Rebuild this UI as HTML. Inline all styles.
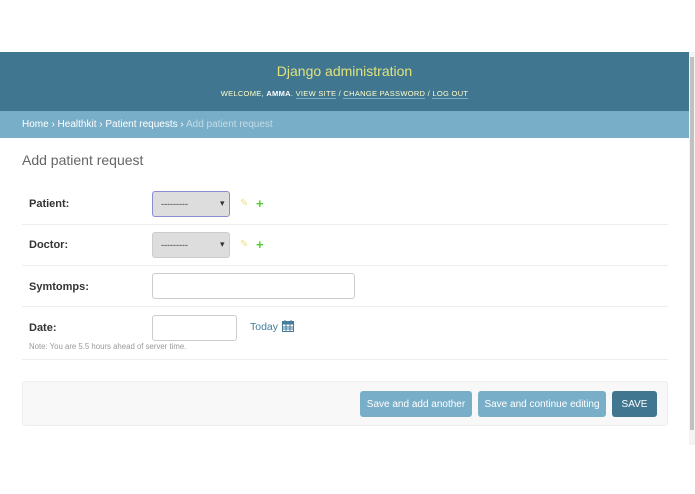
<!DOCTYPE html>
<html><head><style>
*{box-sizing:border-box;margin:0;padding:0}
body{width:695px;height:494px;background:#fff;font-family:"Liberation Sans",sans-serif;position:relative;overflow:hidden}
.a{position:absolute}
.hdr{left:0;top:52px;width:689px;height:59px;background:#417690}
.bc{left:0;top:111px;width:689px;height:27px;background:#79aec8;color:#fff;font-size:10px;padding:7px 22px;line-height:13px}
.row{left:22px;width:646px;border-bottom:1px solid #eee}
.lbl{font-size:11px;font-weight:bold;color:#333}
.sel{background:#ddd;border:1px solid #ccc;border-radius:3px;width:78px;height:26px;font-size:9px;color:#333}
.inp{border:1px solid #ccc;border-radius:3px;height:26px;background:#fff}
.btn{height:26px;border-radius:3px;color:#fff;font-size:10px;line-height:26px;padding-top:1px;text-align:center;background:#79aec8}
</style></head><body>
<div class="a hdr"></div>
<div class="a" style="left:0;top:63px;width:689px;text-align:center;color:#dfe37e;font-size:14px">Django administration</div>
<div class="a" style="left:0;top:89px;width:689px;text-align:center;color:#ffc;font-size:7.5px;letter-spacing:0.3px">WELCOME, <b style="color:#fff">AMMA</b>. <span style="border-bottom:1px solid #79aec8">VIEW SITE</span> / <span style="border-bottom:1px solid #79aec8">CHANGE PASSWORD</span> / <span style="border-bottom:1px solid #79aec8">LOG OUT</span></div>
<div class="a bc">Home › Healthkit › Patient requests › <span style="color:#c4dce8">Add patient request</span></div>
<div class="a" style="left:22px;top:152px;font-size:14px;color:#666">Add patient request</div>

<div class="a row" style="top:183px;height:42px"></div>
<div class="a lbl" style="left:29px;top:198px">Patient:</div>
<div class="a sel" style="left:152px;top:191px;border-color:#8a8ed0;background:#ddd"><span class="a" style="left:8px;top:7px">---------</span><span class="a" style="left:67px;top:6px">▾</span></div>
<div class="a" style="left:240px;top:198px;color:#f0e08a;font-size:10px">✎</div>
<div class="a" style="left:256px;top:196px;color:#5c3;font-size:13px;font-weight:bold">+</div>

<div class="a row" style="top:225px;height:41px"></div>
<div class="a lbl" style="left:29px;top:239px">Doctor:</div>
<div class="a sel" style="left:152px;top:232px"><span class="a" style="left:8px;top:7px">---------</span><span class="a" style="left:67px;top:6px">▾</span></div>
<div class="a" style="left:240px;top:239px;color:#f0e08a;font-size:10px">✎</div>
<div class="a" style="left:256px;top:237px;color:#5c3;font-size:13px;font-weight:bold">+</div>

<div class="a row" style="top:266px;height:41px"></div>
<div class="a lbl" style="left:29px;top:281px">Symtomps:</div>
<div class="a inp" style="left:152px;top:273px;width:203px"></div>

<div class="a row" style="top:307px;height:53px"></div>
<div class="a lbl" style="left:29px;top:322px">Date:</div>
<div class="a inp" style="left:152px;top:315px;width:85px"></div>
<div class="a" style="left:250px;top:321px;font-size:10.5px;color:#447e9b">Today <span style="color:#ccc">|</span></div>
<svg class="a" style="left:282px;top:320px" width="12" height="12" viewBox="0 0 12 12"><rect x="0.5" y="1.5" width="11" height="10" fill="none" stroke="#447e9b"/><rect x="0.5" y="1.5" width="11" height="3" fill="#447e9b"/><path d="M3 0v3M9 0v3M0.5 7h11M0.5 9h11M4 4.5v7M8 4.5v7" stroke="#447e9b"/></svg>
<div class="a" style="left:29px;top:342px;font-size:7.8px;color:#999">Note: You are 5.5 hours ahead of server time.</div>

<div class="a" style="left:22px;top:381px;width:646px;height:45px;background:#f8f8f8;border:1px solid #eee;border-radius:3px"></div>
<div class="a btn" style="left:360px;top:391px;width:112px">Save and add another</div>
<div class="a btn" style="left:478px;top:391px;width:128px">Save and continue editing</div>
<div class="a btn" style="left:612px;top:391px;width:45px;background:#417690">SAVE</div>

<div class="a" style="left:689px;top:52px;width:6px;height:393px;background:#f4f4f4"></div>
<div class="a" style="left:690px;top:57px;width:4px;height:373px;background:#c1c1c1"></div>
</body></html>
